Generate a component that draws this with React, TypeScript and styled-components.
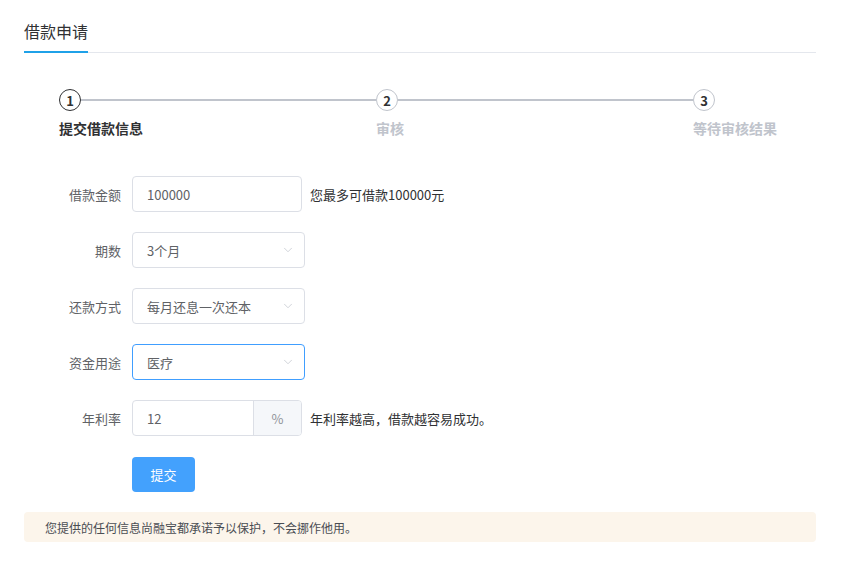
import React from 'react';
import styled, { createGlobalStyle } from 'styled-components';
import { ChevronDown } from 'lucide-react';

const GlobalStyle = createGlobalStyle`
  body {
    margin: 0;
    background: #fff;
    font-family: "Helvetica Neue", "Noto Sans CJK SC", "Noto Sans", sans-serif;
    color: #303133;
  }
`;

const Page = styled.div`
  width: 792px;
  padding: 12px 26px 24px 24px;
`;

const Tabs = styled.div`
  display: flex;
  height: 40px;
  border-bottom: 1px solid #e4e7ed;
`;

const Tab = styled.div`
  font-size: 16px;
  line-height: 38px;
  color: #303133;
  border-bottom: 2px solid #1fa1e8;
  margin-bottom: -1px;
`;

const Steps = styled.div`
  display: flex;
  margin: 36px 0 0 35px;
  width: 720px;
`;

const Step = styled.div<{ $last?: boolean }>`
  display: flex;
  flex-direction: column;
  flex: ${(p) => (p.$last ? '0 0 auto' : '0 0 317px')};
`;

const StepHead = styled.div`
  display: flex;
  align-items: center;
`;

const Circle = styled.div<{ $active?: boolean }>`
  box-sizing: border-box;
  width: 22px;
  height: 22px;
  border-radius: 50%;
  border: 1.5px solid ${(p) => (p.$active ? '#303133' : '#c0c4cc')};
  display: flex;
  align-items: center;
  justify-content: center;
  font-size: 13px;
  font-weight: 700;
  color: #303133;
`;

const Line = styled.div`
  flex: 1;
  height: 2px;
  background: #c0c4cc;
`;

const StepTitle = styled.div<{ $active?: boolean }>`
  margin-top: 7px;
  font-size: 14px;
  line-height: 20px;
  font-weight: 700;
  color: ${(p) => (p.$active ? '#303133' : '#c0c4cc')};
  white-space: nowrap;
`;

const Form = styled.div`
  margin-top: 38px;
  display: flex;
  flex-direction: column;
  gap: 20px;
`;

const Row = styled.div`
  display: flex;
  align-items: center;
  height: 36px;
`;

const Label = styled.div`
  width: 97px;
  padding-right: 11px;
  text-align: right;
  font-size: 13px;
  color: #606266;
`;

const Input = styled.div<{ $width: number; $focus?: boolean }>`
  box-sizing: border-box;
  width: ${(p) => p.$width}px;
  height: 36px;
  border: 1px solid ${(p) => (p.$focus ? '#409eff' : '#dcdfe6')};
  border-radius: 4px;
  padding: 0 9px 0 14px;
  display: flex;
  align-items: center;
  justify-content: space-between;
  font-size: 13px;
  color: #606266;
`;

const Group = styled.div`
  box-sizing: border-box;
  width: 170px;
  height: 36px;
  border: 1px solid #dcdfe6;
  border-radius: 4px;
  display: flex;
  overflow: hidden;
`;

const GroupInput = styled.div`
  flex: 1;
  padding-left: 14px;
  display: flex;
  align-items: center;
  font-size: 13px;
  color: #606266;
`;

const Append = styled.div`
  width: 47px;
  border-left: 1px solid #dcdfe6;
  background: #f5f7fa;
  display: flex;
  align-items: center;
  justify-content: center;
  font-size: 13px;
  color: #909399;
`;

const Hint = styled.div`
  margin-left: 8px;
  font-size: 13px;
  color: #303133;
`;

const Button = styled.button`
  margin-left: 108px;
  width: 63px;
  height: 35px;
  border: none;
  border-radius: 4px;
  background: #43a1fd;
  color: #fff;
  font-size: 13px;
  font-family: inherit;
  padding: 0;
`;

const Notice = styled.div`
  margin-top: 20px;
  height: 30px;
  border-radius: 4px;
  background: #fcf5eb;
  padding-left: 21px;
  display: flex;
  align-items: center;
  font-size: 12px;
  color: #4a4d53;
`;

const steps = ['提交借款信息', '审核', '等待审核结果'];

const Select = ({ value, focus }: { value: string; focus?: boolean }) => (
  <Input $width={173} $focus={focus}>
    <span>{value}</span>
    <ChevronDown size={14} color="#c0c4cc" strokeWidth={1.25} />
  </Input>
);

const App = () => {
  return (
    <>
      <GlobalStyle />
      <Page>
        <Tabs>
          <Tab>借款申请</Tab>
        </Tabs>
        <Steps>
          {steps.map((title, i) => (
            <Step key={title} $last={i === steps.length - 1}>
              <StepHead>
                <Circle $active={i === 0}>{i + 1}</Circle>
                {i < steps.length - 1 && <Line />}
              </StepHead>
              <StepTitle $active={i === 0}>{title}</StepTitle>
            </Step>
          ))}
        </Steps>
        <Form>
          <Row>
            <Label>借款金额</Label>
            <Input $width={170}>100000</Input>
            <Hint>您最多可借款100000元</Hint>
          </Row>
          <Row>
            <Label>期数</Label>
            <Select value="3个月" />
          </Row>
          <Row>
            <Label>还款方式</Label>
            <Select value="每月还息一次还本" />
          </Row>
          <Row>
            <Label>资金用途</Label>
            <Select value="医疗" focus />
          </Row>
          <Row>
            <Label>年利率</Label>
            <Group>
              <GroupInput>12</GroupInput>
              <Append>%</Append>
            </Group>
            <Hint>年利率越高，借款越容易成功。</Hint>
          </Row>
          <Row>
            <Button>提交</Button>
          </Row>
        </Form>
        <Notice>您提供的任何信息尚融宝都承诺予以保护，不会挪作他用。</Notice>
      </Page>
    </>
  );
};

export default App;
